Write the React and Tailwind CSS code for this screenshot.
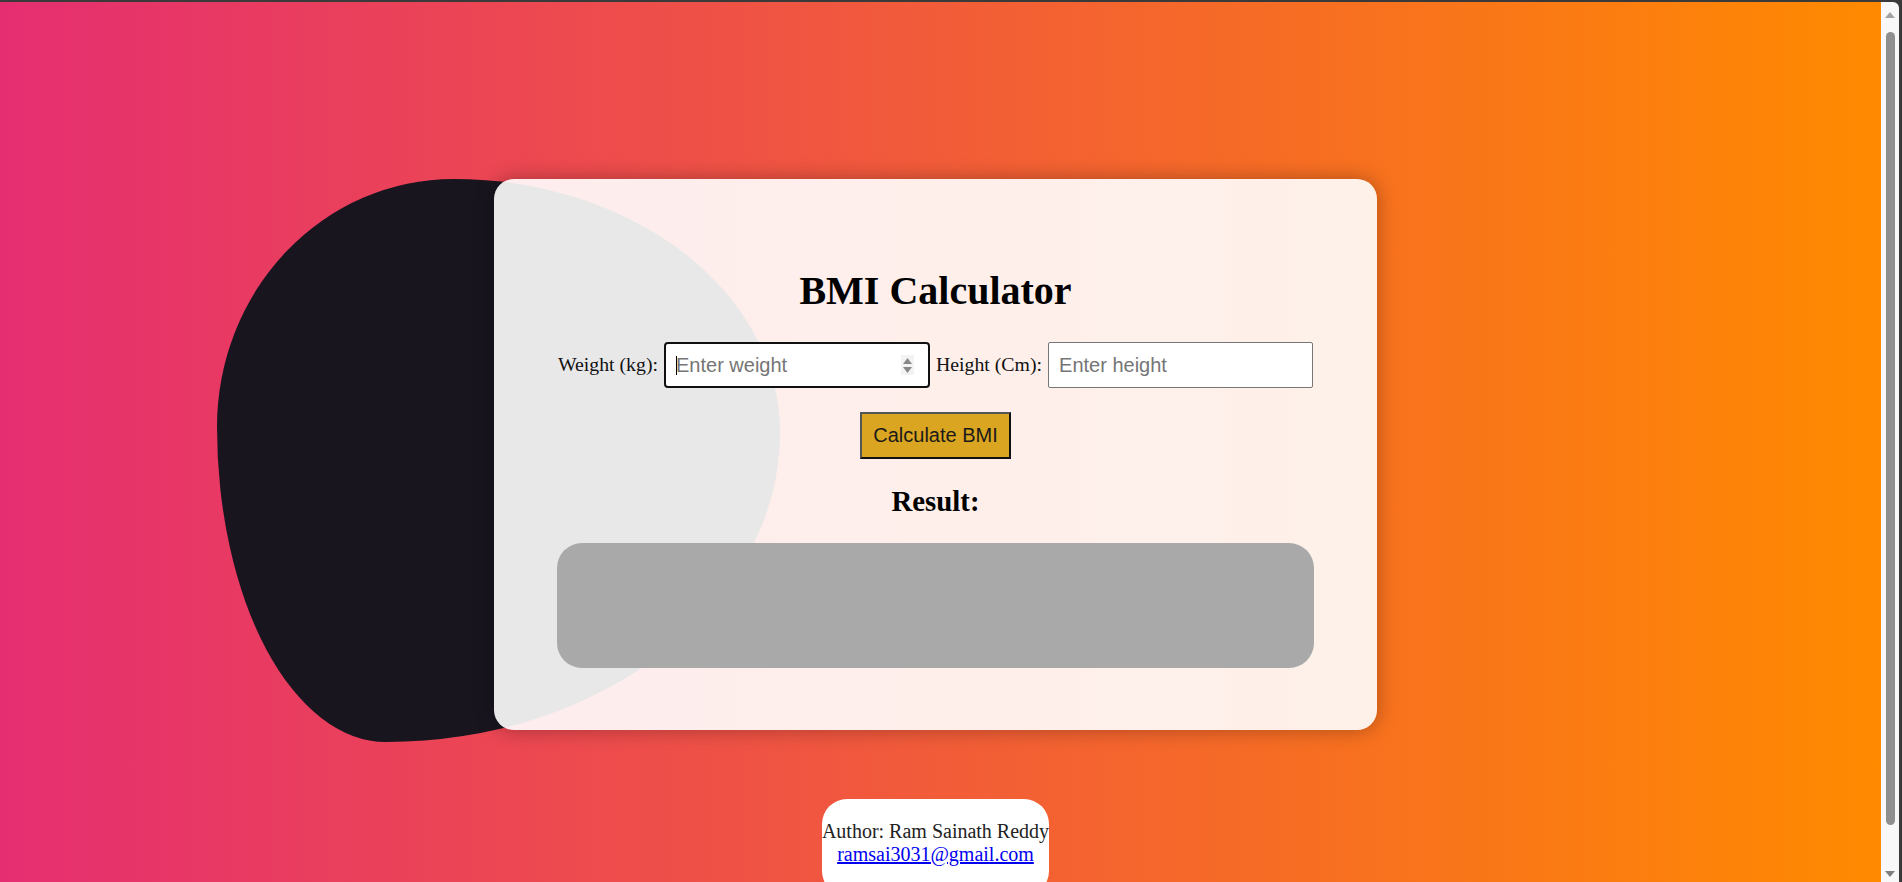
import React, { useState } from "react";

export default function App() {
  const [weight, setWeight] = useState("");
  const [height, setHeight] = useState("");
  const [result, setResult] = useState("");

  const calculate = () => {
    const w = parseFloat(weight);
    const h = parseFloat(height) / 100;
    if (!w || !h) {
      setResult("");
      return;
    }
    setResult((w / (h * h)).toFixed(2));
  };

  return (
    <div className="h-[882px] w-full flex overflow-hidden bg-[#3a3a3a] pt-[2px] pr-[3px]">
      {/* Page */}
      <main className="relative flex-1 flex flex-col items-center pr-[10px] bg-[linear-gradient(to_right,#e52e71,#ff8a00)] font-['Liberation_Serif',serif]">
        {/* Blob behind the card */}
        <div className="absolute left-[217px] top-[177px] w-[563px] h-[563px] bg-[#18151f] rounded-[42%_58%_70%_30%/44%_45%_55%_56%]" />

        {/* Card */}
        <div className="relative z-10 shrink-0 mt-[177px] w-[883px] h-[551px] bg-white/90 rounded-[20px] shadow-[0_0_20px_rgba(0,0,0,0.3)] px-[63px] pt-[90px] flex flex-col items-center">
          <h1 className="text-[40px] leading-[44px] font-bold text-black">BMI Calculator</h1>

          <div className="mt-[29px] flex items-center gap-[6px] whitespace-nowrap text-[19.8px] text-[#111]">
            <label htmlFor="weight" className="shrink-0">Weight (kg):</label>
            <div className="relative shrink-0">
              <input
                id="weight"
                type="text"
                value={weight}
                onChange={(e) => setWeight(e.target.value)}
                placeholder="Enter weight"
                className="w-[266px] h-[46px] bg-white border-2 border-[#101010] rounded-[4px] px-[10px] font-['Liberation_Sans',sans-serif] text-[20px] text-black placeholder:text-[#757575] outline-none"
              />
              {/* caret */}
              <span className="absolute left-[12px] top-[14px] w-px h-[19px] bg-black" />
              {/* spinner */}
              <span className="absolute right-[16px] top-[13px] w-[13px] h-[20px] bg-[#f3f3f3] flex items-center justify-center">
                <svg width="11" height="17" viewBox="0 0 11 17">
                  <polygon points="5.5,1 10,7 1,7" fill="#888" />
                  <polygon points="1,10 10,10 5.5,16" fill="#888" />
                </svg>
              </span>
            </div>
            <label htmlFor="height" className="shrink-0">Height (Cm):</label>
            <input
              id="height"
              type="text"
              value={height}
              onChange={(e) => setHeight(e.target.value)}
              placeholder="Enter height"
              className="shrink-0 w-[265px] h-[46px] bg-white border border-[#767676] rounded-[2px] px-[10px] font-['Liberation_Sans',sans-serif] text-[20px] text-black placeholder:text-[#757575] outline-none"
            />
          </div>

          <button
            onClick={calculate}
            className="mt-[24px] h-[47px] px-[11px] bg-[#daa520] border-2 border-t-[#555] border-l-[#555] border-b-[#111] border-r-[#111] font-['Liberation_Sans',sans-serif] text-[20px] leading-[23px] text-[#1a1a1a]"
          >
            Calculate BMI
          </button>

          <h2 className="mt-[26px] text-[28.8px] leading-[33px] font-bold text-black">Result:</h2>

          <div className="mt-[25px] w-full h-[125px] bg-[#a9a9a9] rounded-[25px] flex items-center justify-center text-[24px]">
            {result}
          </div>
        </div>

        {/* Footer */}
        <footer className="shrink-0 mt-[69px] bg-white rounded-[25px] pt-[21px] pb-[30px] text-center text-[20px] leading-[23px] text-[#222]">
          <p>Author: Ram Sainath Reddy</p>
          <a href="mailto:ramsai3031@gmail.com" className="text-[#0000ee] underline">
            ramsai3031@gmail.com
          </a>
        </footer>
      </main>

      {/* Scrollbar */}
      <div className="w-[18px] bg-[#f8f8f8] rounded-tr-[6px] flex flex-col items-center pt-[10px] pb-[5px]">
        <svg width="10" height="6" viewBox="0 0 10 6">
          <polygon points="5,0 10,6 0,6" fill="#a3a3a3" />
        </svg>
        <div className="mt-[14px] w-[9px] h-[793px] rounded-full bg-[#8f8f8f]" />
        <div className="flex-1" />
        <svg width="10" height="6" viewBox="0 0 10 6">
          <polygon points="0,0 10,0 5,6" fill="#7f7f7f" />
        </svg>
      </div>
    </div>
  );
}
